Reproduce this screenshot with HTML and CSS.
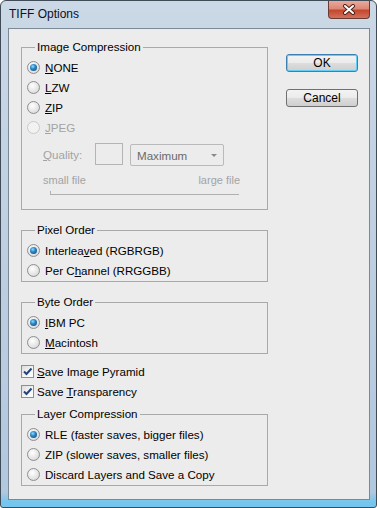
FILE: index.html
```html
<!DOCTYPE html>
<html>
<head>
  <meta charset="UTF-8">
  <title>TIFF Options</title>
  <link rel="stylesheet" href="styles.css">
</head>
<body>
  <div class="window">
    <div class="window__titlebar">
      <span class="window__title">TIFF Options</span>
      <span class="window__close">
        <svg width="14" height="11" viewBox="0 0 14 11">
          <path d="M3 2 L11 9 M11 2 L3 9" stroke="#4d2219" stroke-width="4" stroke-linecap="round"/>
          <path d="M3 2 L11 9 M11 2 L3 9" stroke="#ffffff" stroke-width="2" stroke-linecap="round"/>
        </svg>
      </span>
    </div>

    <div class="window__client">
      <div class="options">
        <fieldset class="group group--compression">
          <legend>Image Compression</legend>
          <label class="option"><span class="radio radio--checked"></span><span><u>N</u>ONE</span></label>
          <label class="option"><span class="radio"></span><span><u>L</u>ZW</span></label>
          <label class="option"><span class="radio"></span><span><u>Z</u>IP</span></label>
          <label class="option option--disabled"><span class="radio radio--disabled"></span><span><u>J</u>PEG</span></label>

          <div class="quality">
            <span class="quality__label"><u>Q</u>uality:</span>
            <span class="textbox"></span>
            <span class="select">Maximum<span class="select__arrow"></span></span>
          </div>
          <div class="quality__scale">
            <span>small file</span>
            <span>large file</span>
          </div>
          <div class="slider"></div>
        </fieldset>

        <fieldset class="group">
          <legend>Pixel Order</legend>
          <label class="option"><span class="radio radio--checked"></span><span>Interlea<u>v</u>ed (RGBRGB)</span></label>
          <label class="option"><span class="radio"></span><span>Per C<u>h</u>annel (RRGGBB)</span></label>
        </fieldset>

        <fieldset class="group">
          <legend>Byte Order</legend>
          <label class="option"><span class="radio radio--checked"></span><span><u>I</u>BM PC</span></label>
          <label class="option"><span class="radio"></span><span><u>M</u>acintosh</span></label>
        </fieldset>

        <div class="checks">
          <label class="option option--check">
            <span class="checkbox">
              <svg width="11" height="11" viewBox="0 0 11 11"><path d="M2 5.5 L4.5 8 L9.5 2.5" fill="none" stroke="#24437a" stroke-width="2"/></svg>
            </span>
            <span><u>S</u>ave Image Pyramid</span>
          </label>
          <label class="option option--check">
            <span class="checkbox">
              <svg width="11" height="11" viewBox="0 0 11 11"><path d="M2 5.5 L4.5 8 L9.5 2.5" fill="none" stroke="#24437a" stroke-width="2"/></svg>
            </span>
            <span>Save <u>T</u>ransparency</span>
          </label>
        </div>

        <fieldset class="group group--layers">
          <legend>Layer Compression</legend>
          <label class="option"><span class="radio radio--checked"></span><span>RLE (faster saves, bigger files)</span></label>
          <label class="option"><span class="radio"></span><span>ZIP (slower saves, smaller files)</span></label>
          <label class="option"><span class="radio"></span><span>Discard Layers and Save a Copy</span></label>
        </fieldset>
      </div>

      <div class="actions">
        <button class="button button--default">OK</button>
        <button class="button">Cancel</button>
      </div>
    </div>
  </div>
</body>
</html>
```

FILE: styles.css
```css
/* Dialog frame */
body {
  margin: 0;
  font-family: "Liberation Sans", Arial, sans-serif;
  font-size: 11.6px;
  color: #000;
}

.window {
  box-sizing: border-box;
  width: 377px;
  height: 508px;
  display: flex;
  flex-direction: column;
  border: 1px solid #404b58;
  border-radius: 6px 6px 3px 3px;
  background: linear-gradient(to bottom, #cbd8e6 0, #bccde0 60%, #b2c8de 97%, #74c6ee 99%);
}

.window__titlebar {
  height: 27px;
  display: flex;
  justify-content: space-between;
  align-items: flex-start;
}

.window__title {
  padding-left: 8px;
  line-height: 27px;
  font-size: 12px;
  color: #0e0e28;
}

.window__close {
  width: 42px;
  height: 18px;
  margin-right: 6px;
  display: flex;
  align-items: center;
  justify-content: center;
  box-sizing: border-box;
  border: 1px solid #6b3a34;
  border-top: none;
  border-radius: 0 0 4px 4px;
  background: linear-gradient(to bottom, #e9aa9c 0, #dc8877 45%, #c6462f 55%, #d0725a 100%);
}

.window__client {
  flex: 1;
  margin: 0 6px 7px 7px;
  padding: 8px 11px 0 12px;
  display: flex;
  gap: 18px;
  border: 1px solid #7b8896;
  background-color: #ececec;
}

/* Group boxes */
.options {
  width: 247px;
}

.group {
  box-sizing: border-box;
  width: 247px;
  min-width: 0;
  margin: 10px 0 0 0;
  padding: 0 0 1px 5px;
  border: 1px solid #a9a9a9;
}

.group--compression {
  margin-top: 0;
  padding-bottom: 14px;
}

.group--layers {
  margin-top: 3px;
}

.group legend {
  margin-left: 8px;
  padding: 0 2px;
  line-height: 20px;
}

.option {
  height: 20px;
  display: flex;
  align-items: center;
}

.option--disabled {
  color: #a3a3a3;
}

.radio {
  box-sizing: border-box;
  width: 13px;
  height: 13px;
  margin-right: 5px;
  display: flex;
  align-items: center;
  justify-content: center;
  border: 1px solid #8c8e90;
  border-radius: 50%;
  background: radial-gradient(circle at 40% 35%, #ffffff 0, #e6e6e6 55%, #cdcdcd 100%);
}

.radio--checked::after {
  content: '';
  width: 7px;
  height: 7px;
  border-radius: 50%;
  background: radial-gradient(circle at 40% 35%, #8fdcff 0, #2a86c8 40%, #143f68 100%);
}

.radio--disabled {
  border-color: #cacaca;
  background: #f2f2f2;
}

.checks {
  margin-top: 7px;
}

.checkbox {
  box-sizing: border-box;
  width: 13px;
  height: 13px;
  margin-right: 3px;
  display: flex;
  align-items: center;
  justify-content: center;
  border: 1px solid #8c8e90;
  background: linear-gradient(135deg, #dcdcdc 0, #f6f6f6 60%, #ffffff 100%);
}

/* Disabled quality controls */
.quality {
  margin-top: 6px;
  padding-left: 16px;
  display: flex;
  align-items: flex-start;
  color: #a3a3a3;
}

.quality__label {
  width: 52px;
  line-height: 23px;
}

.textbox {
  box-sizing: border-box;
  width: 28px;
  height: 22px;
  margin-right: 7px;
  border: 1px solid #b4b4b4;
}

.select {
  box-sizing: border-box;
  width: 94px;
  height: 22px;
  margin-top: 1px;
  padding: 0 0 0 6px;
  display: flex;
  align-items: center;
  justify-content: space-between;
  border: 1px solid #bababa;
  border-radius: 2px;
  color: #6a6a6a;
}

.select__arrow {
  width: 0;
  height: 0;
  margin-right: 6px;
  border-left: 3px solid transparent;
  border-right: 3px solid transparent;
  border-top: 3px solid #8a8a8a;
}

.quality__scale {
  width: 197px;
  margin-top: 7px;
  padding-left: 16px;
  display: flex;
  justify-content: space-between;
  font-size: 11px;
  line-height: 14px;
  color: #a3a3a3;
}

.slider {
  width: 188px;
  height: 3px;
  margin: 4px 0 0 23px;
  border-left: 1px solid #b0b0b0;
  border-bottom: 1px solid #b0b0b0;
}

/* Buttons */
.actions {
  width: 72px;
  display: flex;
  flex-direction: column;
}

.button {
  box-sizing: border-box;
  width: 72px;
  height: 18px;
  margin: 17px 0 0 0;
  padding: 0;
  border: 1px solid #707070;
  border-radius: 3px;
  background: linear-gradient(to bottom, #f3f3f3 0, #ebebeb 50%, #dddddd 51%, #cfcfcf 100%);
  font-family: "Liberation Sans", Arial, sans-serif;
  font-size: 12px;
  line-height: 16px;
  color: #000;
}

.button--default {
  border-color: #3c7fb1;
  box-shadow: inset 0 0 0 1px #62cff7;
}
```
